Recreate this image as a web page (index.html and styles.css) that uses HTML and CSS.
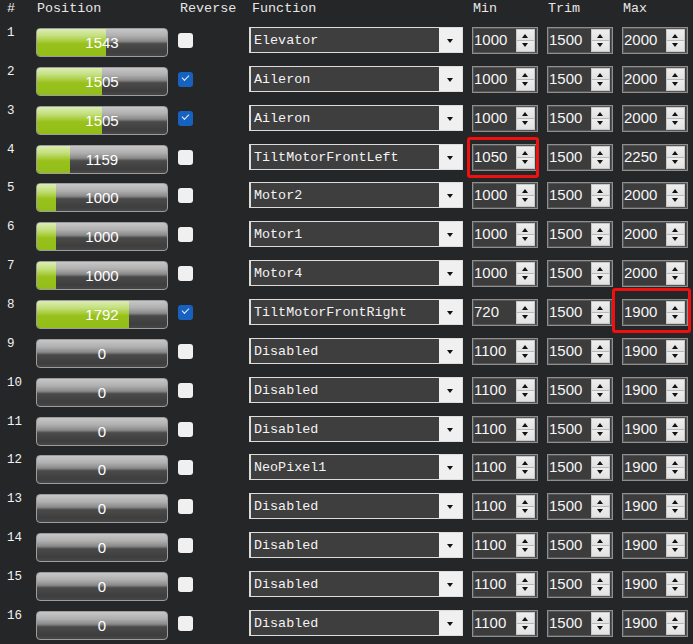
FILE: index.html
```html
<!DOCTYPE html>
<html lang="en">
<head>
    <meta charset="UTF-8">
    <title>Servo Output</title>
    <link rel="stylesheet" href="styles.css">
</head>
<body>
    <div class="servo-table">
        <div class="row head">
            <div class="num">#</div>
            <div class="h-pos">Position</div>
            <div class="h-rev">Reverse</div>
            <div class="h-fn">Function</div>
            <div class="h-spin">Min</div>
            <div class="h-spin">Trim</div>
            <div class="h-spin">Max</div>
        </div>

        <div class="row">
            <div class="num">1</div>
            <div class="bar"><div class="fill" style="width:53.07%"></div><span>1543</span></div>
            <div class="check"></div>
            <div class="combo"><span>Elevator</span><i></i></div>
            <div class="spin"><span>1000</span><b></b></div>
            <div class="spin"><span>1500</span><b></b></div>
            <div class="spin"><span>2000</span><b></b></div>
        </div>
        <div class="row">
            <div class="num">2</div>
            <div class="bar"><div class="fill" style="width:50.36%"></div><span>1505</span></div>
            <div class="check on"></div>
            <div class="combo"><span>Aileron</span><i></i></div>
            <div class="spin"><span>1000</span><b></b></div>
            <div class="spin"><span>1500</span><b></b></div>
            <div class="spin"><span>2000</span><b></b></div>
        </div>
        <div class="row">
            <div class="num">3</div>
            <div class="bar"><div class="fill" style="width:50.36%"></div><span>1505</span></div>
            <div class="check on"></div>
            <div class="combo"><span>Aileron</span><i></i></div>
            <div class="spin"><span>1000</span><b></b></div>
            <div class="spin"><span>1500</span><b></b></div>
            <div class="spin"><span>2000</span><b></b></div>
        </div>
        <div class="row">
            <div class="num">4</div>
            <div class="bar"><div class="fill" style="width:25.64%"></div><span>1159</span></div>
            <div class="check"></div>
            <div class="combo"><span>TiltMotorFrontLeft</span><i></i></div>
            <div class="spin"><span>1050</span><b></b><div class="mark mark-min"></div></div>
            <div class="spin"><span>1500</span><b></b></div>
            <div class="spin"><span>2250</span><b></b></div>
        </div>
        <div class="row">
            <div class="num">5</div>
            <div class="bar"><div class="fill" style="width:14.29%"></div><span>1000</span></div>
            <div class="check"></div>
            <div class="combo"><span>Motor2</span><i></i></div>
            <div class="spin"><span>1000</span><b></b></div>
            <div class="spin"><span>1500</span><b></b></div>
            <div class="spin"><span>2000</span><b></b></div>
        </div>
        <div class="row">
            <div class="num">6</div>
            <div class="bar"><div class="fill" style="width:14.29%"></div><span>1000</span></div>
            <div class="check"></div>
            <div class="combo"><span>Motor1</span><i></i></div>
            <div class="spin"><span>1000</span><b></b></div>
            <div class="spin"><span>1500</span><b></b></div>
            <div class="spin"><span>2000</span><b></b></div>
        </div>
        <div class="row">
            <div class="num">7</div>
            <div class="bar"><div class="fill" style="width:14.29%"></div><span>1000</span></div>
            <div class="check"></div>
            <div class="combo"><span>Motor4</span><i></i></div>
            <div class="spin"><span>1000</span><b></b></div>
            <div class="spin"><span>1500</span><b></b></div>
            <div class="spin"><span>2000</span><b></b></div>
        </div>
        <div class="row">
            <div class="num">8</div>
            <div class="bar"><div class="fill" style="width:70.86%"></div><span>1792</span></div>
            <div class="check on"></div>
            <div class="combo"><span>TiltMotorFrontRight</span><i></i></div>
            <div class="spin"><span>720</span><b></b></div>
            <div class="spin"><span>1500</span><b></b></div>
            <div class="spin"><span>1900</span><b></b><div class="mark mark-max"></div></div>
        </div>
        <div class="row">
            <div class="num">9</div>
            <div class="bar"><span>0</span></div>
            <div class="check"></div>
            <div class="combo"><span>Disabled</span><i></i></div>
            <div class="spin"><span>1100</span><b></b></div>
            <div class="spin"><span>1500</span><b></b></div>
            <div class="spin"><span>1900</span><b></b></div>
        </div>
        <div class="row">
            <div class="num">10</div>
            <div class="bar"><span>0</span></div>
            <div class="check"></div>
            <div class="combo"><span>Disabled</span><i></i></div>
            <div class="spin"><span>1100</span><b></b></div>
            <div class="spin"><span>1500</span><b></b></div>
            <div class="spin"><span>1900</span><b></b></div>
        </div>
        <div class="row">
            <div class="num">11</div>
            <div class="bar"><span>0</span></div>
            <div class="check"></div>
            <div class="combo"><span>Disabled</span><i></i></div>
            <div class="spin"><span>1100</span><b></b></div>
            <div class="spin"><span>1500</span><b></b></div>
            <div class="spin"><span>1900</span><b></b></div>
        </div>
        <div class="row">
            <div class="num">12</div>
            <div class="bar"><span>0</span></div>
            <div class="check"></div>
            <div class="combo"><span>NeoPixel1</span><i></i></div>
            <div class="spin"><span>1100</span><b></b></div>
            <div class="spin"><span>1500</span><b></b></div>
            <div class="spin"><span>1900</span><b></b></div>
        </div>
        <div class="row">
            <div class="num">13</div>
            <div class="bar"><span>0</span></div>
            <div class="check"></div>
            <div class="combo"><span>Disabled</span><i></i></div>
            <div class="spin"><span>1100</span><b></b></div>
            <div class="spin"><span>1500</span><b></b></div>
            <div class="spin"><span>1900</span><b></b></div>
        </div>
        <div class="row">
            <div class="num">14</div>
            <div class="bar"><span>0</span></div>
            <div class="check"></div>
            <div class="combo"><span>Disabled</span><i></i></div>
            <div class="spin"><span>1100</span><b></b></div>
            <div class="spin"><span>1500</span><b></b></div>
            <div class="spin"><span>1900</span><b></b></div>
        </div>
        <div class="row">
            <div class="num">15</div>
            <div class="bar"><span>0</span></div>
            <div class="check"></div>
            <div class="combo"><span>Disabled</span><i></i></div>
            <div class="spin"><span>1100</span><b></b></div>
            <div class="spin"><span>1500</span><b></b></div>
            <div class="spin"><span>1900</span><b></b></div>
        </div>
        <div class="row">
            <div class="num">16</div>
            <div class="bar"><span>0</span></div>
            <div class="check"></div>
            <div class="combo"><span>Disabled</span><i></i></div>
            <div class="spin"><span>1100</span><b></b></div>
            <div class="spin"><span>1500</span><b></b></div>
            <div class="spin"><span>1900</span><b></b></div>
        </div>
    </div>
</body>
</html>
```

FILE: styles.css
```css
body {
    margin: 0;
    padding: 0;
    background-color: #252628;
    color: #eeeeee;
    font-family: "Liberation Mono", monospace;
    font-size: 13.4px;
    overflow: hidden;
}
.servo-table {
    width: 693px;
}
.row {
    display: grid;
    grid-template-columns: 36px 142px 71px 223px 75px 75px 66px;
    align-items: start;
    height: 38.87px;
}
.row.head {
    height: 27px;
    line-height: 18px;
    color: #e6e6e6;
}
.num {
    padding-left: 7px;
    font-size: 12.5px;
    line-height: 12px;
    color: #f2f2f2;
}
.head .num {
    line-height: 18px;
    font-size: 13.4px;
}
.h-pos {
    padding-left: 1px;
}
.h-rev {
    padding-left: 2px;
}
.h-fn {
    padding-left: 3px;
}
.h-spin {
    padding-left: 1px;
}

/* position bar */
.bar {
    position: relative;
    width: 130px;
    height: 27px;
    margin-top: 1px;
    border: 1px solid #9d9d9d;
    border-radius: 4px;
    overflow: hidden;
    background: linear-gradient(to bottom, #c6c6c6 0%, #b0b0b0 25%, #8a8a8a 45%, #4a4a4a 55%, #3e3e3e 85%, #474747 100%);
}
.fill {
    position: absolute;
    left: 0;
    top: 0;
    bottom: 0;
    background: linear-gradient(to bottom, #dcecb4 0%, #c4e07e 25%, #a8cc3c 45%, #98c11c 55%, #93bd18 100%);
}
.bar span {
    position: relative;
    display: block;
    text-align: center;
    line-height: 27px;
    font-family: "Liberation Sans", Arial, sans-serif;
    font-size: 15px;
    color: #ffffff;
}

/* reverse checkbox */
.check {
    width: 15px;
    height: 15px;
    margin-top: 6px;
    border-radius: 3px;
    background: #f0f0f0;
}
.check.on {
    position: relative;
    background: #1762c0;
}
.check.on::after {
    content: "";
    position: absolute;
    left: 4px;
    top: 3px;
    width: 6px;
    height: 3px;
    border-left: 1px solid #e8f0ff;
    border-bottom: 1px solid #e8f0ff;
    transform: rotate(-45deg);
}

/* function dropdown */
.combo {
    display: flex;
    width: 211px;
    height: 24px;
    border: 1px solid #dcdcdc;
    border-left-width: 2px;
    background: #3e3e3f;
}
.combo span {
    flex: 1;
    padding-left: 3px;
    line-height: 25px;
    color: #f4f4f4;
}
.combo i {
    position: relative;
    width: 23px;
    background: #f0f0f0;
}
.combo i::after {
    content: "";
    position: absolute;
    left: 8px;
    top: 11px;
    border-left: 3.5px solid transparent;
    border-right: 3.5px solid transparent;
    border-top: 4px solid #111;
}

/* spin boxes */
.spin {
    position: relative;
    display: flex;
    width: 64px;
    height: 25px;
    border: 1px solid #8f8f8f;
    background: #3c3c3d;
    box-shadow: inset 0 0 0 1px #555;
}
.spin span {
    flex: 1;
    padding-left: 1px;
    line-height: 24px;
    font-family: "Liberation Sans", Arial, sans-serif;
    font-size: 15px;
    color: #f6f6f6;
}
.spin b {
    position: relative;
    width: 19px;
    margin: 1px 2px 1px 0;
    background: linear-gradient(to bottom, #eeeeee 0%, #e2e2e2 48%, #b8b8b8 50%, #eeeeee 52%, #e2e2e2 100%);
    border: 1px solid #c8c8c8;
    box-sizing: border-box;
}
.spin b::before,
.spin b::after {
    content: "";
    position: absolute;
    left: 5px;
    border-left: 3.5px solid transparent;
    border-right: 3.5px solid transparent;
}
.spin b::before {
    top: 4px;
    border-bottom: 4px solid #111;
}
.spin b::after {
    bottom: 4px;
    border-top: 4px solid #111;
}

/* red highlight boxes */
.mark {
    position: absolute;
    border: 3px solid #f01010;
    border-radius: 3px;
}
.mark-min {
    left: -6px;
    right: -2px;
    top: -8px;
    bottom: -8px;
}
.mark-max {
    left: -11px;
    right: -4px;
    top: -12px;
    bottom: -8px;
}
```
